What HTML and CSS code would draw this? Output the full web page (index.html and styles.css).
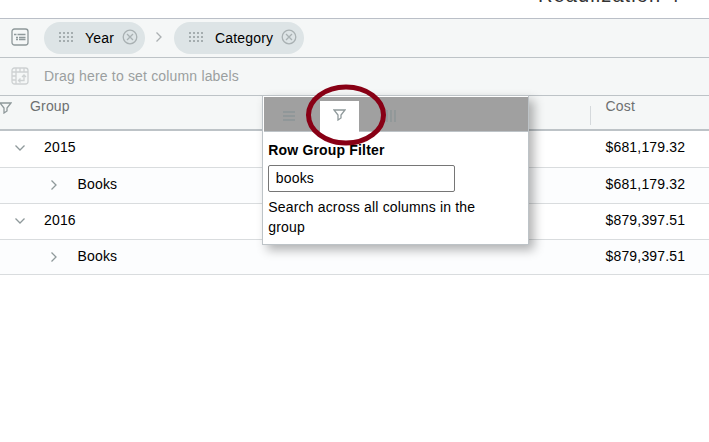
FILE: index.html
```
<!DOCTYPE html>
<html lang="en">
<head>
<meta charset="utf-8">
<title>Grid</title>
<link rel="stylesheet" href="styles.css">
</head>
<body>
<svg class="defs" aria-hidden="true">
  <symbol id="grip" viewBox="0 0 14 10"><path d="M1 0v10M5 0v10M9 0v10M13 0v10" stroke="#8d9698" stroke-width="1.4" stroke-dasharray="2 2"/></symbol>
  <symbol id="close" viewBox="0 0 16 16"><circle cx="8" cy="8" r="6.8"/><path d="M5 5l6 6M11 5l-6 6"/></symbol>
  <symbol id="right" viewBox="0 0 8 12"><path d="M1.5 1.5L6 6 1.5 10.500"/></symbol>
  <symbol id="down" viewBox="0 0 12 8"><path d="M1.500 1.500L6 6l4.500-4.500"/></symbol>
  <symbol id="funnel" viewBox="0 0 13 12"><path d="M1 1h11L8 6v3l-3 2V6z"/></symbol>
</svg>
<header class="title"><span>Readlization 4</span></header>
<main class="grid">
  <div class="bar groups">
    <svg class="ico panel" viewBox="0 0 18 18"><rect x="1" y="1" width="16" height="16" rx="2.500"/><path d="M3 6.500h2.500M6.500 6.500h8M5 9.500h2M8 9.500h6.500M5 11.500h2M8 11.500h6.500"/></svg>
    <div class="chip year"><svg class="grip"><use href="#grip"/></svg><span>Year</span><svg class="ico close"><use href="#close"/></svg></div>
    <svg class="ico next"><use href="#right"/></svg>
    <div class="chip"><svg class="grip"><use href="#grip"/></svg><span>Category</span><svg class="ico close"><use href="#close"/></svg></div>
  </div>
  <div class="bar pivot">
    <svg class="ico panel" viewBox="0 0 18 18"><rect x="1" y="1" width="16" height="16" rx="2.500"/><path d="M5 1v16M1 5h16M9 1v4M13 1v4M1 9h4M1 13h4M7.500 13.500h5.500v-5.500M9.500 11.500l-2 2 2 2M11 10l2-2 2 2"/></svg>
    <span>Drag here to set column labels</span>
  </div>
  <div class="head">
    <svg class="ico funnel"><use href="#funnel"/></svg><span class="name">Group</span><span class="cost">Cost</span>
  </div>
  <div class="row first"><div class="cell"><svg class="ico down"><use href="#down"/></svg><span>2015</span></div><span class="value">$681,179.32</span></div>
  <div class="row alt"><div class="cell child"><svg class="ico right"><use href="#right"/></svg><span>Books</span></div><span class="value">$681,179.32</span></div>
  <div class="row"><div class="cell"><svg class="ico down"><use href="#down"/></svg><span>2016</span></div><span class="value">$879,397.51</span></div>
  <div class="row alt last"><div class="cell child"><svg class="ico right"><use href="#right"/></svg><span>Books</span></div><span class="value">$879,397.51</span></div>
</main>
<section class="menu">
  <div class="tabs">
    <div class="tab"><svg class="ico lines" viewBox="0 0 12 10"><path d="M0 1h12M0 5h12M0 9h12"/></svg></div>
    <div class="tab active"><svg class="ico"><use href="#funnel"/></svg></div>
    <div class="tab"><svg class="ico columns" viewBox="0 0 10 12"><path d="M1 0v12M5 0v12M9 0v12"/></svg></div>
  </div>
  <div class="body">
    <strong>Row Group Filter</strong>
    <input type="text" value="books" aria-label="Row Group Filter">
    <p>Search across all columns in the group</p>
  </div>
</section>
<svg class="highlight" viewBox="0 0 82 64"><ellipse cx="41" cy="32" rx="37.500" ry="28"/></svg>
</body>
</html>
```
FILE: styles.css
```
* { box-sizing: border-box; }
body { margin: 0; height: 442px; overflow: hidden; background: #fff; color: #000; font: 14px/20px "Liberation Sans", Arial, sans-serif; letter-spacing: .17px; position: relative; }
.defs { position: absolute; width: 0; height: 0; }
.ico { fill: none; stroke: #8f999b; stroke-width: 1.3; flex: none; display: block; }
.title { height: 18px; overflow: hidden; padding-left: 538px; }
.title span { display: block; margin-top: -15px; font-size: 20px; line-height: 20px; color: #333; letter-spacing: 1.1px; white-space: nowrap; }
.grid { border-top: 1px solid #babfc7; }
.bar { display: flex; align-items: center; background: #f5f7f7; border-bottom: 1px solid #bdc3c7; padding-left: 11px; }
.groups { height: 39px; }
.pivot { height: 38px; color: #9b9fa0; }
.pivot span { padding-bottom: 2px; }
.panel { width: 18px; height: 18px; margin: 0 15px 2px 0; }
.pivot .panel { stroke: #ced2d3; }
.chip { display: flex; align-items: center; height: 32px; width: 130px; padding-left: 15px; border-radius: 16px; background: #dde4e6; }
.chip.year { width: 101px; }
.grip { width: 14px; height: 10px; margin: 0 12px 2px 0; flex: none; }
.chip span { flex: 1; }
.close { width: 16px; height: 16px; margin: 0 7px 2px 0; stroke: #a9b1b3; }
.next { width: 8px; height: 12px; margin: 0 11px 2px 10px; stroke: #abb0b2; }
.head { display: flex; height: 35px; background: #f5f7f7; border-bottom: 2px solid #bdc3c7; color: #6d7071; }
.head .funnel { width: 13px; height: 12px; margin: 6px 18px 0 -1px; }
.name { width: 560px; }
.head .cost { position: relative; width: 104px; padding-left: 15.5px; }
.head .cost::before { content: ""; position: absolute; left: 0; top: 10px; width: 1px; height: 19px; background: #d5d9dc; }
.row { display: flex; align-items: center; height: 36px; border-bottom: 1px solid #d9dcde; padding-bottom: 3px; }
.row.first { height: 37px; padding-bottom: 4px; }
.row.last { height: 35px; padding-bottom: 2px; }
.alt { background: #fcfdfe; }
.cell { display: flex; align-items: center; width: 605.5px; padding-left: 14px; }
.down { width: 12px; height: 8px; margin: 2px 18px 0 0; }
.child { padding-left: 50px; }
.right { width: 8px; height: 12px; margin: 2px 19.5px 0 0; }
.menu { position: absolute; left: 262px; top: 95px; width: 267px; height: 150px; background: #fff; border: 1px solid #bdc3c7; box-shadow: 5px 5px 10px rgba(0,0,0,.3); padding: 1px 0 0 1px; }
.tabs { display: flex; height: 35px; background: #a0a0a0; border-bottom: 1px solid #bdc3c7; }
.tab { flex: none; display: flex; align-items: center; justify-content: center; width: 39px; height: 32px; margin: 4px 6px; }
.tab:first-child { margin-left: 5px; }
.tab.active { height: 31px; background: #fff; }
.active .ico { width: 13px; height: 12px; margin-bottom: 4px; }
.lines { width: 12px; height: 10px; stroke: #8a9496; margin-bottom: 3px; }
.columns { width: 10px; height: 12px; stroke: #8a9496; margin-bottom: 3px; }
.body { padding: 8px 30px 0 4.3px; }
.body strong { display: block; height: 25px; }
.body input { display: block; width: 187px; height: 27px; border: 1px solid #767676; border-radius: 2px; padding: 0 6.5px 2px; font: inherit; letter-spacing: inherit; }
.body p { margin: 5px 0 0; }
.highlight { position: absolute; left: 305px; top: 83px; width: 82px; height: 64px; fill: none; stroke: #880015; stroke-width: 5; }
```
